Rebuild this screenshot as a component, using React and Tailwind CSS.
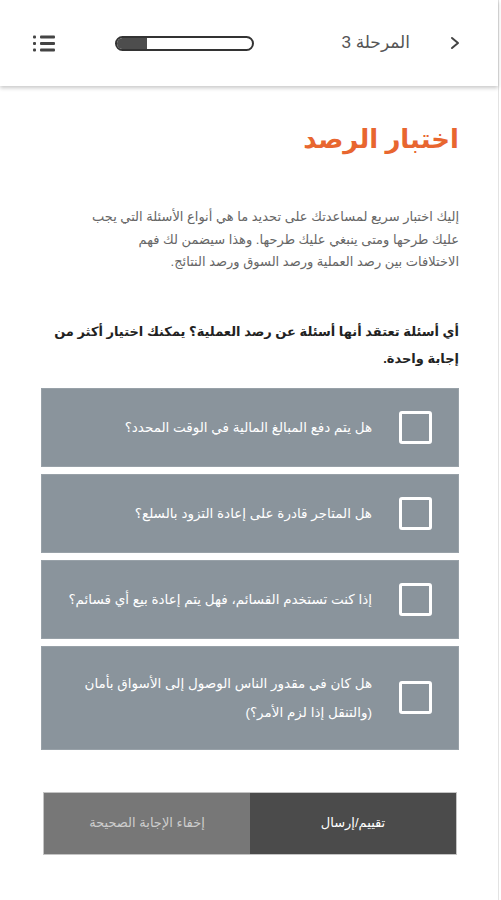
import React from 'react'

const options = [
  'هل يتم دفع المبالغ المالية في الوقت المحدد؟',
  'هل المتاجر قادرة على إعادة التزود بالسلع؟',
  'إذا كنت تستخدم القسائم، فهل يتم إعادة بيع أي قسائم؟',
  'هل كان في مقدور الناس الوصول إلى الأسواق بأمان (والتنقل إذا لزم الأمر؟)',
]

function ListIcon() {
  return (
    <svg width="23" height="17" viewBox="0 0 23 17">
      <rect x="0" y="0.5" width="3" height="3" rx="1" fill="#444" />
      <rect x="0" y="7" width="3" height="3" rx="1" fill="#444" />
      <rect x="0" y="13.5" width="3" height="3" rx="1" fill="#444" />
      <rect x="7" y="0.5" width="15" height="3" rx="1" fill="#444" />
      <rect x="7" y="7" width="15" height="3" rx="1" fill="#444" />
      <rect x="7" y="13.5" width="15" height="3" rx="1" fill="#444" />
    </svg>
  )
}

function Chevron() {
  return (
    <svg width="10" height="14" viewBox="0 0 10 14">
      <polyline points="2,2 8,7 2,12" fill="none" stroke="#444" strokeWidth="2" strokeLinecap="round" strokeLinejoin="round" />
    </svg>
  )
}

export default function App() {
  return (
    <div
      dir="rtl"
      className="w-[499px] min-h-[900px] bg-white border-r border-[#e3e3e3]"
      style={{ fontFamily: 'Arial, "Liberation Sans", "DejaVu Sans", sans-serif' }}
    >
      {/* header */}
      <div className="h-[86px] flex items-center pr-[38px] pl-[33px] bg-white shadow-[0_2px_4px_rgba(0,0,0,0.22)]">
        <Chevron />
        <span className="mr-[40px] text-[17px] text-[#555]">المرحلة 3</span>
        <div className="mr-[87px] w-[139px] h-[15px] rounded-full border-2 border-[#333] bg-white overflow-hidden flex justify-end">
          <div className="w-[30px] h-full bg-[#4d4d4d]" />
        </div>
        <div className="mr-auto">
          <ListIcon />
        </div>
      </div>

      <div className="pr-[39px] pl-[41px]">
        <h1 className="mt-[38px] text-[26px] leading-[30px] font-bold text-[#e8662f]">اختبار الرصد</h1>

        <p className="mt-[52px] text-[13px] leading-[22.5px] text-[#666]">
          إليك اختبار سريع لمساعدتك على تحديد ما هي أنواع الأسئلة التي يجب
          <br />
          عليك طرحها ومتى ينبغي عليك طرحها. وهذا سيضمن لك فهم
          <br />
          الاختلافات بين رصد العملية ورصد السوق ورصد النتائج.
        </p>

        <p className="mt-[44px] text-[13px] leading-[27px] font-bold text-[#222]">
          أي أسئلة تعتقد أنها أسئلة عن رصد العملية؟ يمكنك اختيار أكثر من
          <br />
          إجابة واحدة.
        </p>

        <div className="mt-[16px] flex flex-col gap-[7px]">
          {options.map((o, i) => (
            <label
              key={i}
              className="flex items-center py-[22px] pr-[26px] pl-[20px] bg-[#8a949c] border border-[#98a1a8]"
            >
              <span className="shrink-0 w-[33px] h-[33px] border-[3px] border-white rounded-[3px]" />
              <span className="mr-[27px] text-[13.5px] leading-[29px] text-white">{o}</span>
            </label>
          ))}
        </div>

        <div className="mt-[42px] mx-[2px] flex h-[63px] border border-[#c4c4c4]">
          <button className="flex-1 bg-[#4b4b4b] text-white text-[13px] font-medium">تقييم/إرسال</button>
          <button className="flex-1 bg-[#777] text-[#cdcdcd] text-[13px]">إخفاء الإجابة الصحيحة</button>
        </div>
      </div>
    </div>
  )
}
